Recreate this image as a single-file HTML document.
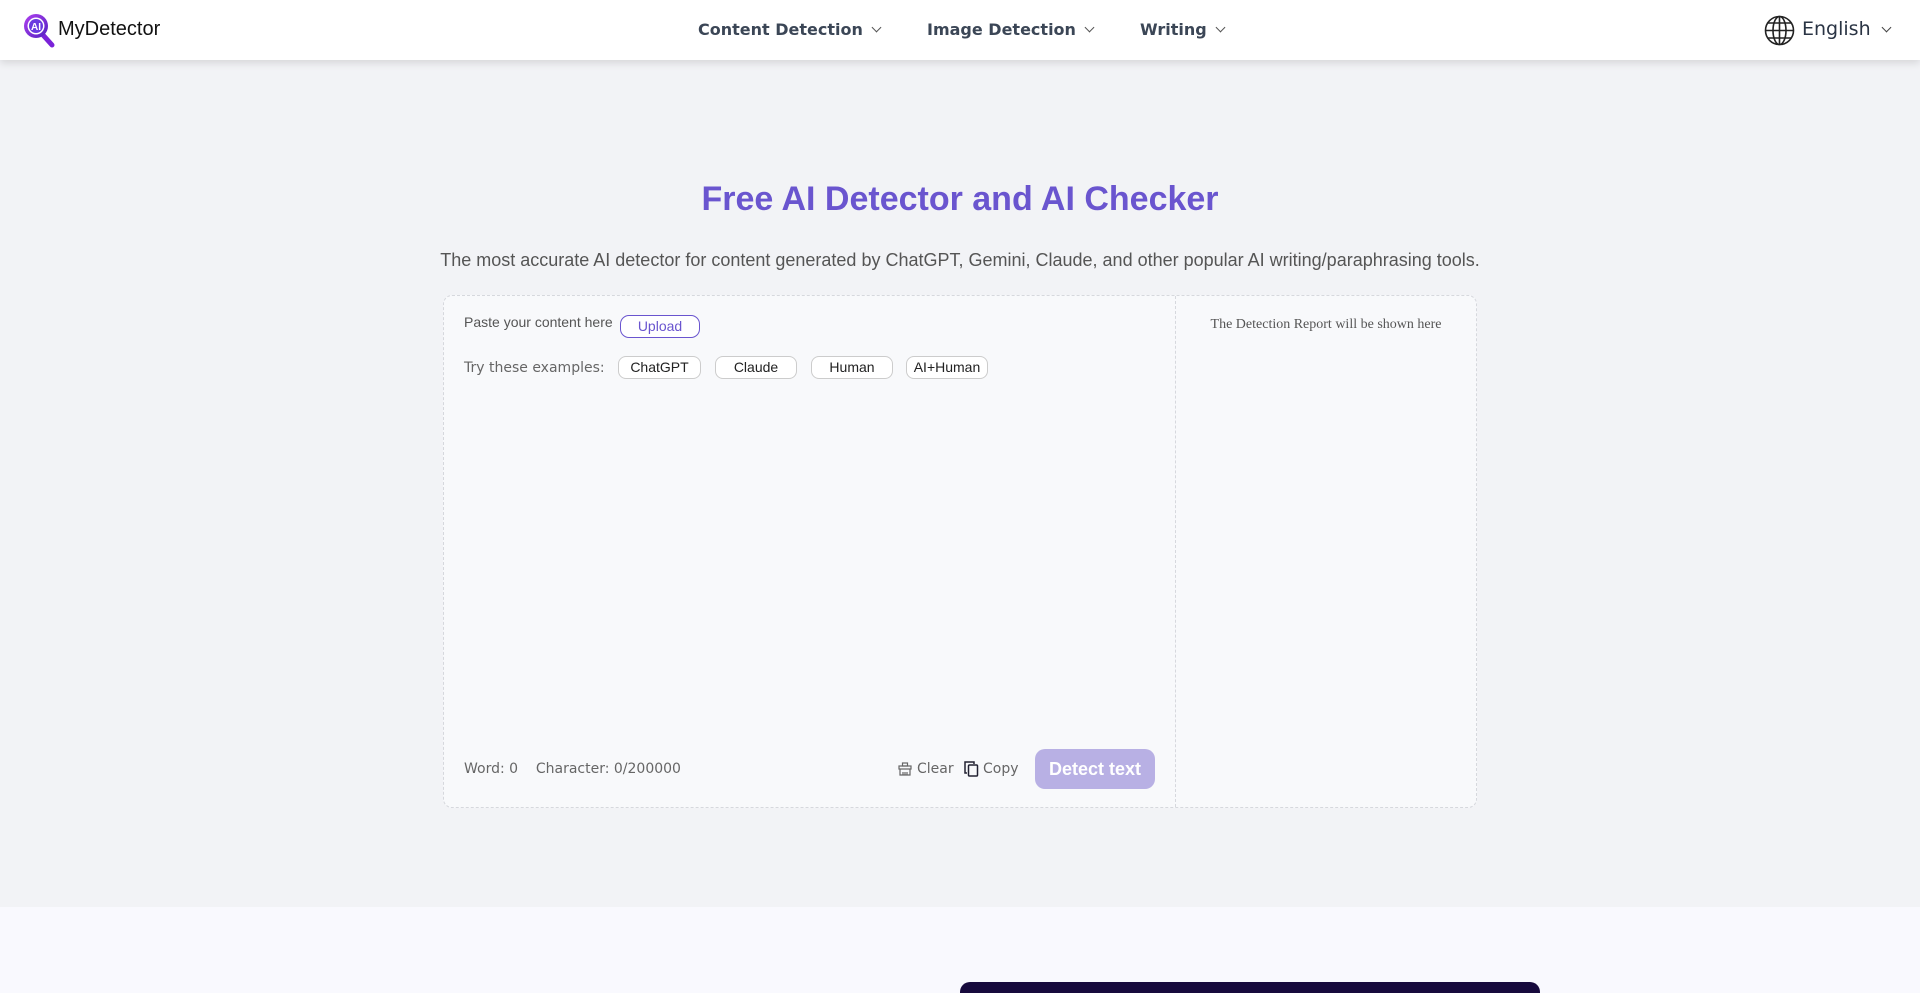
<!DOCTYPE html>
<html style="overflow:hidden;height:993px"><head><meta charset="utf-8"><style>
*{box-sizing:border-box;margin:0;padding:0}
body{width:1920px;height:993px;overflow:hidden;background:#f2f3f6;font-family:"Liberation Sans",sans-serif;position:relative}
.hdr{position:absolute;left:0;top:0;width:1920px;height:60px;background:#fff;box-shadow:0 3px 8px rgba(0,0,0,.12);z-index:2}
.abs{position:absolute;white-space:nowrap}
.nav{font-family:"DejaVu Sans",sans-serif;font-weight:bold;font-size:16px;color:#3b4656;top:20px}
.chev{display:inline-block;width:7px;height:7px;border-right:1.5px solid #555;border-bottom:1.5px solid #555;transform:rotate(45deg);margin-left:10px;position:relative;top:-4px}
.card{position:absolute;left:443px;top:295px;width:1034px;height:513px;border:1px dashed #d6d8dd;border-radius:9px;background:#f8f9fb}
.div{position:absolute;left:1175px;top:296px;height:511px;border-left:1px dashed #d6d8dd}
.pill{position:absolute;top:356px;height:23px;border:1px solid #ccc;border-radius:8px;background:#fff;font-size:14px;color:#222;text-align:center;line-height:21px}
</style></head><body>
<div class="hdr">
<svg class="abs" style="left:23px;top:13px" width="34" height="36" viewBox="0 0 34 36"><defs><linearGradient id="g" x1="0" y1="0" x2="1" y2="1"><stop offset="0" stop-color="#b040f0"/><stop offset="1" stop-color="#5020c0"/></linearGradient></defs><line x1="20" y1="22" x2="29" y2="32" stroke="#7a22d8" stroke-width="5" stroke-linecap="round"/><circle cx="13" cy="13" r="12" fill="url(#g)"/><circle cx="13" cy="13" r="8.5" fill="#fff"/><circle cx="13" cy="13" r="7" fill="#6a3ae0"/><text x="13" y="17" font-size="10" font-weight="bold" fill="#fff" text-anchor="middle" font-family="Liberation Sans">AI</text></svg>
<div class="abs" style="left:58px;top:18px;font-size:20px;color:#111">MyDetector</div>
<div class="abs nav" style="left:698px">Content Detection<span class="chev"></span></div>
<div class="abs nav" style="left:927px">Image Detection<span class="chev"></span></div>
<div class="abs nav" style="left:1140px">Writing<span class="chev"></span></div>
<svg class="abs" style="left:1764px;top:15px" width="31" height="31" viewBox="0 0 31 31" fill="none" stroke="#222" stroke-width="1.6"><circle cx="15.5" cy="15.5" r="14"/><ellipse cx="15.5" cy="15.5" rx="6.5" ry="14"/><line x1="15.5" y1="1.5" x2="15.5" y2="29.5"/><line x1="1.5" y1="15.5" x2="29.5" y2="15.5"/><path d="M4 8h23M4 23h23"/></svg>
<div class="abs" style="left:1802px;top:18px;font-family:'DejaVu Sans',sans-serif;font-size:19px;color:#2a3444">English<span class="chev" style="border-color:#444;margin-left:12px"></span></div>
</div>
<div class="abs" style="left:0;width:1920px;top:180px;text-align:center;font-size:34px;font-weight:bold;color:#6a55cf">Free AI Detector and AI Checker</div>
<div class="abs" style="left:0;width:1920px;top:250px;text-align:center;font-size:18px;color:#555">The most accurate AI detector for content generated by ChatGPT, Gemini, Claude, and other popular AI writing/paraphrasing tools.</div>
<div class="card"></div><div class="div"></div>
<div class="abs" style="left:464px;top:314px;font-size:14px;color:#555">Paste your content here</div>
<div class="abs" style="left:620px;top:315px;width:80px;height:23px;border:1px solid #6a55cf;border-radius:9px;background:#fff;color:#6a55cf;font-size:14px;text-align:center;line-height:21px">Upload</div>
<div class="abs" style="left:464px;top:360px;font-family:'DejaVu Sans',sans-serif;font-size:14px;color:#666">Try these examples:</div>
<div class="pill" style="left:618px;width:83px">ChatGPT</div>
<div class="pill" style="left:715px;width:82px">Claude</div>
<div class="pill" style="left:811px;width:82px">Human</div>
<div class="pill" style="left:906px;width:82px">AI+Human</div>
<div class="abs" style="left:464px;top:761px;font-family:'DejaVu Sans',sans-serif;font-size:14px;color:#666">Word: 0&nbsp;&nbsp;&nbsp; Character: 0/200000</div>
<svg class="abs" style="left:898px;top:762px" width="14" height="14" viewBox="0 0 14 14" fill="none" stroke="#666" stroke-width="1.2"><rect x="4.5" y="1" width="5" height="3"/><rect x="1" y="4" width="12" height="3"/><path d="M2 7v6h10V7M5 10v3M7 10v3M9 10v3"/></svg>
<div class="abs" style="left:917px;top:761px;font-family:'DejaVu Sans',sans-serif;font-size:14px;color:#666">Clear</div>
<svg class="abs" style="left:964px;top:761px" width="15" height="16" viewBox="0 0 15 16" fill="none" stroke="#223" stroke-width="1.5"><path d="M3 12H1V1h9v2"/><rect x="4.5" y="4" width="9" height="11" rx="1"/></svg>
<div class="abs" style="left:983px;top:761px;font-family:'DejaVu Sans',sans-serif;font-size:14px;color:#666">Copy</div>
<div class="abs" style="left:1035px;top:749px;width:120px;height:40px;border-radius:10px;background:#b8b0e4;color:#fff;font-weight:bold;font-size:18px;text-align:center;line-height:40px">Detect text</div>
<div class="abs" style="left:1175px;width:302px;top:317px;text-align:center;font-family:'Liberation Serif',serif;font-size:14px;color:#555">The Detection Report will be shown here</div>
<div class="abs" style="left:0;top:907px;width:1920px;height:86px;background:#f9f9fe"></div>
<div class="abs" style="left:960px;top:982px;width:580px;height:11px;border-radius:10px 10px 0 0;background:#170a3d"></div>
</body></html>
